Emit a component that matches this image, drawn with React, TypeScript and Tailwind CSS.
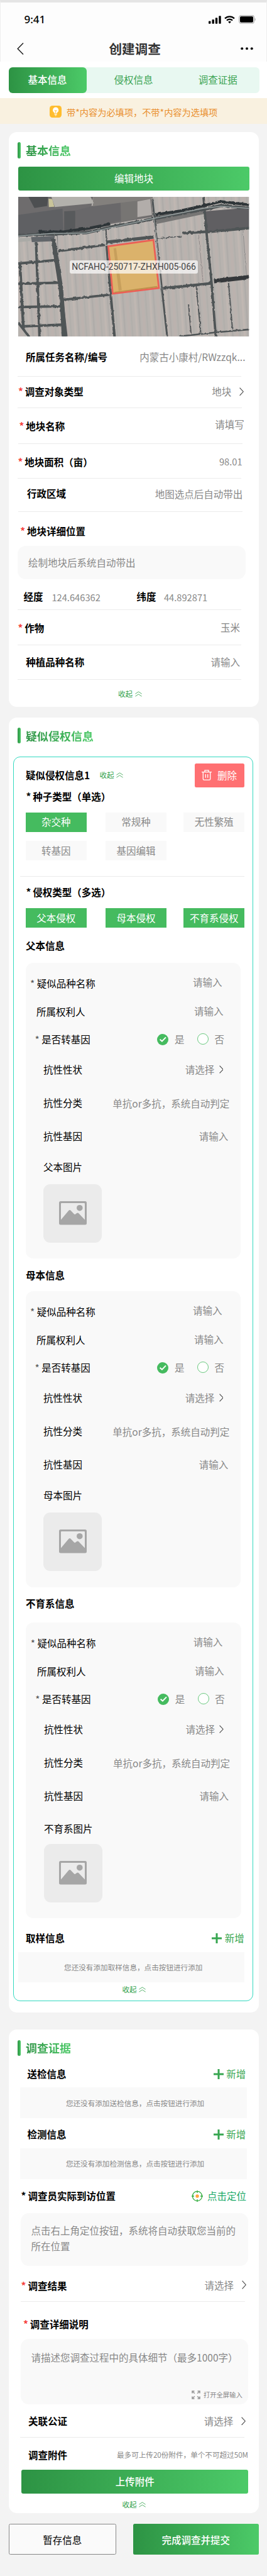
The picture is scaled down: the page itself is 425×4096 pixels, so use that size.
import type { ReactNode } from "react";

const GREEN_GRADIENT = "bg-linear-to-r from-[#2d9344] to-[#4cca68]";

function Star({ color = "text-[#f5403c]" }: { color?: string }) {
  return <span className={`inline-block w-[10.8px] shrink-0 ${color}`}>*</span>;
}

function Chevron({ className }: { className: string }) {
  return (
    <svg viewBox="0 0 7 14" className={className} fill="none" stroke="#444" strokeWidth="1.1" preserveAspectRatio="none">
      <path d="M0.6 0.6 L6.3 7 L0.6 13.4" />
    </svg>
  );
}

function Divider({ className }: { className: string }) {
  return <div className={`h-px shrink-0 bg-[#ebebeb] ${className}`} />;
}

function Row({ className, children }: { className: string; children: ReactNode }) {
  return (
    <div className={`flex shrink-0 items-center justify-between whitespace-nowrap leading-none ${className}`}>{children}</div>
  );
}

function Label({ star, starColor, children }: { star?: boolean; starColor?: string; children: ReactNode }) {
  return (
    <span className="flex font-bold text-black">
      {star && <Star color={starColor} />}
      {children}
    </span>
  );
}

function Value({ className = "", children }: { className?: string; children: ReactNode }) {
  return <span className={`text-[#888] ${className}`}>{children}</span>;
}

function Collapse({ className = "" }: { className?: string }) {
  return (
    <span className={`flex items-center gap-[3.6px] text-[11.5px] leading-none text-[#2f9f49] ${className}`}>
      收起
      <svg viewBox="0 0 11 9" className="h-[9px] w-[11px]" fill="none" stroke="#2f9f49" strokeWidth="0.8">
        <path d="M0.4 4.2 L5.5 0.9 L10.6 4.2 M0.4 8.2 L5.5 4.9 L10.6 8.2" />
      </svg>
    </span>
  );
}

function SectionTitle({ children }: { children: ReactNode }) {
  return (
    <div className="ml-[14.1px] flex h-[25.1px] items-center gap-[8px]">
      <span className={`h-full w-[5.4px] rounded-full ${GREEN_GRADIENT}`} />
      <span className={`bg-clip-text text-[18px] font-bold leading-none text-transparent ${GREEN_GRADIENT}`}>
        {children}
      </span>
    </div>
  );
}

function Chip({ active, className = "", children }: { active?: boolean; className?: string; children: ReactNode }) {
  return (
    <span
      className={`flex h-[30.8px] w-[97px] items-center justify-center whitespace-nowrap leading-none ${
        active ? "bg-[#45bb5f] text-white" : "bg-[#f9f9f9] text-[#888]"
      } ${className}`}
    >
      {children}
    </span>
  );
}

function AddButton() {
  return (
    <span className="flex items-center gap-[4.4px] text-[#37a650]">
      <svg viewBox="0 0 16 16" className="h-[16px] w-[16px]" fill="#37a650">
        <path d="M6.5 0h3v6.5H16v3H9.5V16h-3V9.5H0v-3h6.5z" />
      </svg>
      新增
    </span>
  );
}

function EmptyHint({ className, children }: { className: string; children: ReactNode }) {
  return (
    <div
      className={`flex items-center justify-center whitespace-nowrap bg-[#f9f9f9] text-[11.6px] leading-none text-[#888] ${className}`}
    >
      {children}
    </div>
  );
}

function FieldMap() {
  return (
    <svg viewBox="0 0 1355 773" preserveAspectRatio="none" className="block h-full w-full">
      <defs>
        <pattern id="furrow" width="90" height="900" patternUnits="userSpaceOnUse" patternTransform="rotate(-4)">
          <rect width="90" height="900" fill="#b8b3af" />
          <rect x="8" width="12" height="900" fill="#c0b7b2" />
          <rect x="30" width="8" height="900" fill="#aeaba8" />
          <rect x="50" width="16" height="900" fill="#bbb2ae" />
          <rect x="74" width="7" height="900" fill="#b0aeaa" />
        </pattern>
        <filter id="soft"><feGaussianBlur stdDeviation="2.5" /></filter>
        <filter id="rough" x="-5%" y="-20%" width="110%" height="140%">
          <feTurbulence type="fractalNoise" baseFrequency="0.05" numOctaves="2" seed="4" />
          <feDisplacementMap in="SourceGraphic" scale="12" />
          <feGaussianBlur stdDeviation="1.5" />
        </filter>
      </defs>
      <rect width="1355" height="773" fill="url(#furrow)" />
      <g filter="url(#soft)">
        <path d="M0 0H440L430 50L780 10L790 110L540 150L400 190L0 215Z" fill="#6e6c6d" />
        <path d="M0 100L260 65L265 190L0 210Z" fill="#5f6164" />
        <path d="M60 0L175 0L170 50L95 62Z" fill="#4d5051" />
        <path d="M270 80L335 76L335 180L270 185Z" fill="#595a5c" />
        <path d="M440 50L600 25L600 130L420 165L340 180L335 76Z" fill="#69676a" />
        <path d="M600 10L780 0L790 100L605 140Z" fill="#777473" />
        <path d="M440 0H790V10L438 52Z" fill="#83807d" />
        <path d="M178 10L200 12L212 55L180 56Z" fill="#c9c49a" />
        <path d="M195 0H425L444 36L215 56Z" fill="#b3b1ac" />
        <path d="M700 25L775 12L785 100L700 112Z" fill="#b2adaa" />
        <path d="M1095 80L1355 60V170L1100 195Z" fill="#615f62" />
        <path d="M800 105L1090 45L1092 95L810 150Z" fill="#777675" />
        <path d="M0 212H230L255 770H290L235 320L228 215Z" fill="#56595b" />
        <path d="M0 228L75 226L73 244L0 250Z" fill="#aaaaa6" />
        <path d="M75 222L215 215L210 245L80 250Z" fill="#62666a" />
      </g>
      <g fill="none" stroke="#505457" filter="url(#rough)">
        <path d="M105 250L125 770" strokeWidth="15" />
        <path d="M205 230L250 500L272 773" strokeWidth="26" />
        <path d="M0 368L215 350M0 480L240 474M0 608L250 604M20 715L255 706" strokeWidth="14" />
        <path d="M10 370L30 720" strokeWidth="16" />
        <path d="M235 300L510 265" strokeWidth="13" />
        <path d="M265 568L535 540" strokeWidth="13" />
        <path d="M515 180L520 265" strokeWidth="8" />
        <path d="M520 270L545 560L566 773" strokeWidth="15" />
        <path d="M520 250L795 222" strokeWidth="18" />
        <path d="M788 10L800 120L845 520L875 773" strokeWidth="11" />
        <path d="M815 230L960 218" strokeWidth="5" />
        <path d="M965 200L1110 192M1100 195L1355 172" strokeWidth="15" />
        <path d="M1088 0L1105 190L1135 470L1160 773" strokeWidth="14" />
        <path d="M850 505L1130 478" strokeWidth="15" />
        <path d="M1150 465L1355 443" strokeWidth="24" stroke="#34393b" />
        <path d="M1000 590L1015 755M1045 490L1072 750M1235 475L1258 730" strokeWidth="7" />
        <path d="M950 770L1160 748L1355 732" strokeWidth="9" />
        <path d="M1320 185L1340 430M1060 210L1085 470" strokeWidth="3" opacity=".5" />
        <path d="M0 694L65 773" strokeWidth="14" />
        <path d="M0 212L400 198L550 165L790 122L1090 70L1190 48L1355 62" strokeWidth="17" />
        <path d="M120 193L270 192L420 172L540 150M805 98L950 78L1090 48L1190 26L1355 44" stroke="#2e3437" strokeWidth="15" />
      </g>
      <path d="M0 216L200 202L400 200L545 170L790 120L1085 64L1190 52L1355 64" fill="none" stroke="#a3adad" strokeWidth="4" />
      <path d="M795 110L812 240L838 510" fill="none" stroke="#a8aaa8" strokeWidth="4" />
      <path d="M529 273L794 238L826 503L555 534Z" fill="#dbb26b" stroke="#ec5f55" strokeWidth="10" />
      <path d="M560 285L575 283L608 515L590 520Z" fill="#c79f5c" />
      <path d="M566 524L815 492L818 500L562 529Z" fill="#bd934c" />
    </svg>
  );
}

function PictureBox() {
  return (
    <div className="ml-[28.4px] flex h-[93px] w-[93px] items-center justify-center rounded-[11px] bg-[#ebebeb] pb-[1px]">
      <svg viewBox="0 0 44 37.5" className="h-[37.5px] w-[44px]">
        <path
          fillRule="evenodd"
          fill="#a6a6a6"
          d="M2.5 0H41.5A2.5 2.5 0 0 1 44 2.5V35A2.5 2.5 0 0 1 41.500 37.500H2.500A2.500 2.500 0 0 1 0 35V2.500A2.500 2.500 0 0 1 2.500 0ZM4 3A1 1 0 0 0 3 4V29.500L15.200 15Q17 12.800 18.800 15L23.800 20.300Q25 21.500 26.500 20.300L28.200 19Q29.800 17.800 31.500 19.500L41 29.500V4A1 1 0 0 0 40 3Z"
        />
        <ellipse cx="32.800" cy="10.700" rx="4.800" ry="4.800" fill="#a6a6a6" />
      </svg>
    </div>
  );
}

function ParentPanel({ className, picture, pictureRow }: { className: string; picture: string; pictureRow: string }) {
  return (
    <div className={`h-[470.3px] w-[342.8px] shrink-0 rounded-[12px] bg-[#f9f9f9] pt-[12.5px] text-black ${className}`}>
      <Row className="h-[40px] pl-[7.2px] pr-[30px]">
        <span className="flex"><Star color="text-[#555]" />疑似品种名称</span>
        <Value className="pb-[4.4px]">请输入</Value>
      </Row>
      <Row className="mt-[4.8px] h-[40px] pl-[17.4px] pr-[27.9px]">
        <span>所属权利人</span>
        <Value className="pb-[1.4px]">请输入</Value>
      </Row>
      <Row className="mt-[4.5px] h-[40px] pl-[14.8px] pr-[26.5px]">
        <span className="flex"><Star color="text-[#555]" />是否转基因</span>
        <span className="flex items-center text-[#888]">
          <svg viewBox="0 0 18 18" className="mr-[9.6px] h-[18px] w-[18px]">
            <circle cx="9" cy="9" r="9" fill="#45bb5f" />
            <path d="M4.600 8.700 L7.900 11.700 L14 5.400" fill="none" stroke="#fff" strokeWidth="2" />
          </svg>
          是
          <svg viewBox="0 0 18 18" className="mb-[2px] ml-[20.3px] mr-[9.600px] h-[18px] w-[18px]">
            <circle cx="9" cy="9" r="8.500" fill="#fff" stroke="#45bb5f" strokeWidth="0.800" />
          </svg>
          否
        </span>
      </Row>
      <Row className="mt-[7.8px] h-[40px] pl-[28.4px] pr-[28px]">
        <span>抗性性状</span>
        <span className="flex items-center gap-[7.500px] text-[#888]">
          请选择
          <Chevron className="h-[13px] w-[6.800px]" />
        </span>
      </Row>
      <Row className="mt-[12.900px] h-[40px] pl-[28.400px] pr-[18.300px]">
        <span>抗性分类</span>
        <Value className="pt-[2.200px]">单抗or多抗，系统自动判定</Value>
      </Row>
      <Row className="mt-[13px] h-[40px] pl-[28.400px] pr-[20.300px]">
        <span>抗性基因</span>
        <Value>请输入</Value>
      </Row>
      <Row className={`h-[40px] pl-[28.400px] ${pictureRow}`}>
        <span>{picture}</span>
      </Row>
      <PictureBox />
    </div>
  );
}

function StatusBar() {
  return (
    <div className="flex h-[53.200px] items-center justify-between pl-[37.500px] pr-[16.600px]">
      <span className="font-['Noto_Sans'] text-[17px] font-medium leading-none text-black">9:41</span>
      <span className="flex items-center pt-[1.500px]">
        <svg viewBox="0 0 20 13" className="h-[13px] w-[20px]" fill="#000">
          <rect x="0" y="8.500" width="3.400" height="4.300" rx="0.800" />
          <rect x="5.500" y="6" width="3.400" height="6.800" rx="0.800" />
          <rect x="10.800" y="3.300" width="3.400" height="9.500" rx="0.800" />
          <rect x="16.300" y="0.300" width="3.400" height="12.500" rx="0.800" />
        </svg>
        <svg viewBox="0 0 17 12.500" className="ml-[5.400px] h-[12.500px] w-[17px]" fill="none" stroke="#000" strokeWidth="2.200">
          <path d="M1 4.400 A10.600 10.600 0 0 1 16 4.400" />
          <path d="M3.900 7.500 A6.600 6.600 0 0 1 13.100 7.500" />
          <path d="M8.500 12.200 L6.100 9.800 A3.500 3.500 0 0 1 10.900 9.800Z" fill="#000" stroke="none" />
        </svg>
        <svg viewBox="0 0 27 14" className="ml-[6.200px] h-[14px] w-[27px]">
          <rect x="0.600" y="0.600" width="23.800" height="12.600" rx="3.200" fill="none" stroke="#aaa" strokeWidth="1.100" />
          <rect x="2" y="2" width="21" height="9.800" rx="1.800" fill="#000" />
          <path d="M25.600 4.600 Q26.900 5.200 26.900 6.900 T25.600 9.200Z" fill="#aaa" />
        </svg>
      </span>
    </div>
  );
}

export default function App() {
  return (
    <div className="flex h-[4096px] w-[425px] flex-col overflow-hidden bg-[#f3f3f3] font-['Noto_Sans_CJK_SC',sans-serif] text-[15.5px]">
      <header className="h-[98.100px] shrink-0 border-x border-t-[4px] border-x-[#eee] border-t-[#e5e5e5] bg-[#fdfdfd]">
        <StatusBar />
        <div className="flex h-[40.900px] items-center justify-between pl-[25.600px] pr-[21.400px]">
          <svg viewBox="0 0 11 19" className="h-[19px] w-[11px]" fill="none" stroke="#222" strokeWidth="1.500">
            <path d="M10 0.500 L1.200 9.500 L10 18.500" />
          </svg>
          <span className="pl-[9px] text-[20.600px] font-bold leading-none text-[#333]">创建调查</span>
          <svg viewBox="0 0 20 4.400" className="h-[4.400px] w-[20px]" fill="#111">
            <circle cx="2.200" cy="2.200" r="2" />
            <circle cx="10" cy="2.200" r="2" />
            <circle cx="17.800" cy="2.200" r="2" />
          </svg>
        </div>
      </header>

      <div className="flex h-[58px] shrink-0 items-center bg-white pl-[13.500px]">
        <nav className="flex h-[41px] w-[399.300px] items-center rounded-[6px] bg-[#e8f8f1] leading-none text-[#3fa556]">
          <span className={`flex h-full w-[124.200px] items-center justify-center rounded-[6px] font-medium text-white ${GREEN_GRADIENT}`}>
            基本信息
          </span>
          <span className="w-[149.600px] text-center">侵权信息</span>
          <span className="w-[119px] text-center">调查证据</span>
        </nav>
      </div>

      <div className="flex h-[40.900px] shrink-0 items-center justify-center gap-[7.800px] bg-[#f9f1e0] pt-[2.400px] pr-[0px] text-[14.200px] leading-none text-[#e98f2e]">
        <span className="flex h-[19.500px] w-[19.500px] items-center justify-center rounded-[4.500px] bg-[#ffbd2e]">
          <svg viewBox="0 0 12 16" className="h-[15px] w-[11.300px]">
            <path d="M6 0.500A4.900 4.900 0 0 0 3.700 9.700V11H8.300V9.700A4.900 4.900 0 0 0 6 0.500Z" fill="#fff" />
            <path d="M3.800 6.300H8.200M6 6.300V11" stroke="#ffbd2e" strokeWidth="0.900" />
            <path d="M3.700 12.200H8.300M4.300 13.700H7.700M5.200 15H6.800" stroke="#fff" strokeWidth="0.900" />
          </svg>
        </span>
        带*内容为必填项，不带*内容为选填项
      </div>

      <section className="mx-[13.500px] mt-[12.700px] flex h-[914.300px] w-[398.500px] shrink-0 flex-col rounded-[13px] bg-white pt-[16.800px]">
        <SectionTitle>基本信息</SectionTitle>
        <button className={`ml-[15px] mt-[13px] h-[38.700px] w-[368.900px] rounded-[3px] leading-none text-white ${GREEN_GRADIENT}`}>
          编辑地块
        </button>
        <div className="relative ml-[15.800px] mt-[9.300px] h-[222.700px] w-[367.300px]">
          <FieldMap />
          <span className="absolute left-[81.900px] top-[101.400px] flex h-[21px] w-[203.800px] items-center justify-center whitespace-nowrap rounded-[3px] bg-white/70 font-[Roboto] text-[14px] leading-none text-[#444]">
            NCFAHQ-250717-ZHXH005-066
          </span>
        </div>
        <Row className="h-[63.100px] pl-[27.400px] pr-[21.500px] pt-[2.900px]">
          <Label>所属任务名称/编号</Label>
          <Value>内蒙古小康村/RWzzqk...</Value>
        </Row>
        <Divider className="ml-[14px] w-[356.800px]" />
        <Row className="h-[48.800px] pb-[1.800px] pl-[15.500px] pr-[24px]">
          <Label star>调查对象类型</Label>
          <span className="flex items-center gap-[12.800px] text-[#888]">
            地块
            <Chevron className="h-[13.500px] w-[7px]" />
          </span>
        </Row>
        <Divider className="ml-[14.300px] w-[356.800px]" />
        <Row className="h-[55.800px] pl-[16.900px] pr-[23.300px] pt-[1.600px]">
          <Label star>地块名称</Label>
          <Value className="pb-[6.400px]">请填写</Value>
        </Row>
        <Divider className="ml-[15.800px] w-[356.800px]" />
        <Row className="h-[54.500px] pl-[15px] pr-[26.400px] pt-[2.300px]">
          <Label star>地块面积（亩）</Label>
          <Value className="text-[14.700px]">98.01</Value>
        </Row>
        <Divider className="ml-[14px] w-[356.800px]" />
        <Row className="h-[51.800px] pb-[5.600px] pl-[29.500px] pr-[25.800px]">
          <Label>行政区域</Label>
          <Value className="pt-[2.600px]">地图选点后自动带出</Value>
        </Row>
        <Divider className="ml-[15.800px] w-[356.800px]" />
        <Row className="h-[53.500px] pl-[18.800px] pt-[8.100px]">
          <Label star>地块详细位置</Label>
        </Row>
        <div className="ml-[14.100px] flex h-[53.700px] w-[363.300px] shrink-0 items-center rounded-[13px] bg-[#f9f9f9] pl-[17.400px] leading-none text-[#888]">
          绘制地块后系统自动带出
        </div>
        <Row className="h-[47.500px] pl-[23.900px] pt-[7.900px]">
          <span className="flex w-[180px] items-center">
            <Label>经度</Label>
            <Value className="ml-[14px] pt-[1.500px] text-[14.700px]">124.646362</Value>
          </span>
          <span className="flex grow items-center">
            <Label>纬度</Label>
            <Value className="ml-[12.500px] pt-[1.500px] text-[14.700px]">44.892871</Value>
          </span>
        </Row>
        <Divider className="ml-[14px] w-[356.800px]" />
        <Row className="h-[55.100px] pl-[15px] pr-[30px] pt-[2.300px]">
          <Label star>作物</Label>
          <Value className="pb-[2px]">玉米</Value>
        </Row>
        <Divider className="ml-[14px] w-[356.800px]" />
        <Row className="h-[54.300px] pb-[0.700px] pl-[27.800px] pr-[30px]">
          <Label>种植品种名称</Label>
          <Value>请输入</Value>
        </Row>
        <Divider className="ml-[14px] w-[356.800px]" />
        <Row className="h-[42.600px] pl-[174.500px] pt-[2.600px]">
          <Collapse />
        </Row>
      </section>

      <section className="mx-[13.500px] mt-[17.400px] flex h-[2058.300px] w-[398.500px] shrink-0 flex-col rounded-[13px] bg-white pt-[15.600px]">
        <SectionTitle>疑似侵权信息</SectionTitle>
        <div className="ml-[7.900px] mt-[20.500px] flex h-[1979.100px] w-[381.900px] shrink-0 flex-col rounded-[11px] border border-[#33d9c0]">
          <div className="flex items-center pl-[18.600px] pt-[10.100px] leading-none">
            <Label>疑似侵权信息1</Label>
            <Collapse className="ml-[15.300px] grow" />
            <span className="mr-[12.900px] flex h-[38.600px] w-[79px] items-center gap-[8.700px] rounded-[2.500px] bg-[#ff7072] pl-[11px] text-white">
              <svg viewBox="0 0 16 17" className="h-[17px] w-[16px]" fill="none" stroke="#fff" strokeWidth="1.300">
                <path d="M0 3.700H16M5 3.500V0.900H11V3.500M2.300 4V14.800Q2.300 16.200 3.700 16.200H12.300Q13.700 16.200 13.700 14.800V4M6.300 7V12.800M9.700 7V12.800" />
              </svg>
              删除
            </span>
          </div>
          <Row className="h-[39.500px] pb-[10.500px] pl-[19.100px]">
            <Label star starColor="text-black">种子类型（单选）</Label>
          </Row>
          <div className="ml-[18.300px] flex">
            <Chip active>杂交种</Chip>
            <Chip className="ml-[30.300px]">常规种</Chip>
            <Chip className="ml-[27.200px]">无性繁殖</Chip>
          </div>
          <div className="ml-[18.300px] mt-[14.400px] flex">
            <Chip>转基因</Chip>
            <Chip className="ml-[30.300px]">基因编辑</Chip>
          </div>
          <Divider className="ml-[10.100px] mt-[25.200px] w-[357px]" />
          <Row className="h-[50.200px] pb-[1px] pl-[19.100px]">
            <Label star starColor="text-black">侵权类型（多选）</Label>
          </Row>
          <div className="ml-[18.300px] flex">
            <Chip active>父本侵权</Chip>
            <Chip active className="ml-[30.300px]">母本侵权</Chip>
            <Chip active className="ml-[27.200px]">不育系侵权</Chip>
          </div>
          <Row className="h-[56.100px] pl-[18.600px] pt-[1.900px]"><Label>父本信息</Label></Row>
          <ParentPanel className="ml-[18.300px]" picture="父本图片" pictureRow="mt-[8.900px] mb-[7.400px]" />
          <Row className="h-[52px] pl-[18.600px] pt-[1.200px]"><Label>母本信息</Label></Row>
          <ParentPanel className="ml-[18.300px]" picture="母本图片" pictureRow="mt-[8.900px] mb-[7.400px]" />
          <Row className="h-[56.600px] pb-[4.400px] pl-[18.600px]"><Label>不育系信息</Label></Row>
          <ParentPanel className="ml-[19.100px]" picture="不育系图片" pictureRow="mt-[11.900px] mb-[4.400px]" />
          <Row className="h-[53.100px] pl-[18.600px] pr-[13.500px] pt-[9.500px]">
            <Label>取样信息</Label>
            <AddButton />
          </Row>
          <EmptyHint className="ml-[6.600px] h-[48.600px] w-[360.500px] shrink-0 pl-[6px] pt-[1.500px]">
            您还没有添加取样信息，点击按钮进行添加
          </EmptyHint>
          <Row className="h-[28.400px] pb-[5.400px] pl-[172.200px]"><Collapse /></Row>
        </div>
      </section>

      <section className="mx-[13.500px] mt-[27.200px] flex h-[769.600px] w-[398.500px] shrink-0 flex-col rounded-[13px] bg-white pt-[16.800px]">
        <SectionTitle>调查证据</SectionTitle>
        <Row className="h-[50.500px] pl-[29.900px] pr-[20.800px] pt-[7.400px]">
          <Label>送检信息</Label>
          <AddButton />
        </Row>
        <EmptyHint className="ml-[18.800px] h-[48.900px] w-[360.500px] shrink-0 pl-[5px] pt-[1.500px]">
          您还没有添加送检信息，点击按钮进行添加
        </EmptyHint>
        <Row className="h-[47.700px] pl-[29.900px] pr-[20.800px] pt-[4.500px]">
          <Label>检测信息</Label>
          <AddButton />
        </Row>
        <EmptyHint className="ml-[18.800px] h-[49.100px] w-[360.500px] shrink-0 pl-[5px] pt-[1.500px]">
          您还没有添加检测信息，点击按钮进行添加
        </EmptyHint>
        <Row className="h-[54.100px] pl-[20.100px] pr-[20px]">
          <Label star starColor="text-black">调查员实际到访位置</Label>
          <span className="flex items-center gap-[6.500px] text-[#19a866]">
            <svg viewBox="0 0 18 18" className="h-[18px] w-[18px]" fill="none" stroke="#2fab3a" strokeWidth="1.300">
              <circle cx="9" cy="9" r="7.600" />
              <path d="M9 0V4M9 14V18M0 9H4M14 9H18" />
              <circle cx="9" cy="9" r="2.700" fill="#ffa63d" stroke="none" />
            </svg>
            点击定位
          </span>
        </Row>
        <div className="ml-[19px] h-[83.900px] w-[362.700px] shrink-0 rounded-[13px] bg-[#f9f9f9] pl-[17.100px] pr-[12px] pt-[14.500px] leading-[25.200px] text-[#888]">
          点击右上角定位按钮，系统将自动获取您当前的所在位置
        </div>
        <Row className="h-[56.600px] pl-[20.100px] pr-[20px] pt-[6.200px]">
          <Label star>调查结果</Label>
          <span className="flex items-center gap-[13px] pb-[1.600px] text-[#888]">
            请选择
            <Chevron className="h-[14px] w-[7px]" />
          </span>
        </Row>
        <Divider className="ml-[19px] w-[357px]" />
        <Row className="h-[58.600px] pl-[23.400px] pt-[12.600px]"><Label star>调查详细说明</Label></Row>
        <div className="ml-[19px] flex h-[103.800px] w-[362.700px] shrink-0 flex-col justify-between rounded-[13px] bg-[#f9f9f9] pb-[5.200px] pl-[17.100px] pr-[9.500px] pt-[19.400px] text-[#888]">
          <span className="whitespace-nowrap leading-[20px]">请描述您调查过程中的具体细节（最多1000字）</span>
          <span className="flex h-[20px] items-center gap-[5px] self-end text-[10.300px] leading-none">
            <svg viewBox="0 0 14 14" className="h-[14px] w-[14px]" fill="#999" stroke="#999" strokeWidth="1.600">
              <path d="M1 4.500V1H4.500M1 1L4.800 4.800M9.500 1H13V4.500M13 1L9.200 4.800M1 9.500V13H4.500M1 13L4.800 9.200M9.500 13H13V9.500M13 13L9.200 9.200" fill="none" />
            </svg>
            打开全屏输入
          </span>
        </div>
        <Row className="h-[52px] pl-[31.500px] pr-[20.800px] pt-[2px]">
          <Label>关联公证</Label>
          <span className="flex items-center gap-[13px] pb-[1.200px] text-[#888]">
            请选择
            <Chevron className="h-[13.500px] w-[7px]" />
          </span>
        </Row>
        <Divider className="ml-[18.500px] w-[357px]" />
        <Row className="h-[51px] pl-[31.500px] pr-[17px] pt-[4.800px]">
          <Label>调查附件</Label>
          <Value className="text-[11.600px]">最多可上传20份附件，单个不可超过50M</Value>
        </Row>
        <button className={`ml-[20.700px] h-[38.600px] w-[361px] shrink-0 rounded-[3px] font-medium leading-none text-white ${GREEN_GRADIENT}`}>
          上传附件
        </button>
        <Row className="h-[30.900px] pl-[181.100px] pt-[3.500px]"><Collapse /></Row>
      </section>

      <footer className="mt-[16.900px] flex h-[49px] shrink-0 justify-between px-[13.500px] leading-none">
        <button className="h-full w-[171.500px] rounded-[2.500px] border border-[#888] bg-[#fafafa] pt-[2px] text-black">暂存信息</button>
        <button className={`h-full w-[199.500px] rounded-[2.500px] pt-[2px] font-medium text-white ${GREEN_GRADIENT}`}>完成调查并提交</button>
      </footer>
    </div>
  );
}
